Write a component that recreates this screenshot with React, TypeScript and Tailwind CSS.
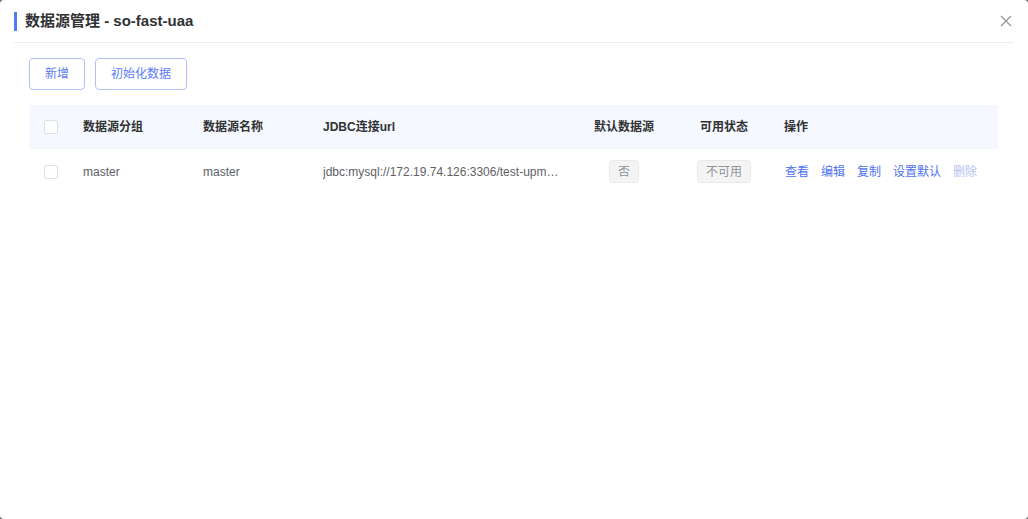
import React from 'react';

const rows = [
  {
    group: 'master',
    name: 'master',
    url: 'jdbc:mysql://172.19.74.126:3306/test-upms?useUnicode=true&characterEncoding=utf8',
    isDefault: '否',
    status: '不可用',
  },
];

function Checkbox() {
  return <span className="block w-[14px] h-[14px] border border-[#dcdfe6] rounded-[2px] bg-white" />;
}

function Tag({ children }: { children: React.ReactNode }) {
  return (
    <span className="inline-flex items-center h-[23px] px-[8px] text-[12px] leading-none text-[#909399] bg-[#f4f4f5] border border-[#e9e9eb] rounded-[4px]">
      {children}
    </span>
  );
}

export default function App() {
  return (
    <div
      className="w-[1028px] h-[519px] bg-[#6b6b6b]"
      style={{ fontFamily: '"Liberation Sans", "Noto Sans CJK SC", sans-serif' }}
    >
      <div className="w-full h-full bg-white rounded-[4px] flex flex-col">
        {/* Header */}
        <div className="mx-[14px] h-[43px] border-b border-[#ebeef5] flex items-center justify-between">
          <div className="flex items-center gap-[8px]">
            <span className="block w-[3px] h-[19px] bg-[#4e7cf6]" />
            <h1 className="text-[15px] font-bold text-[#303133]">数据源管理 - so-fast-uaa</h1>
          </div>
          <button className="w-[16px] h-[16px] flex items-center justify-center">
            <svg width="12" height="12" viewBox="0 0 12 12" fill="none" stroke="#909399" strokeWidth="1.2">
              <path d="M1 1L11 11M11 1L1 11" />
            </svg>
          </button>
        </div>

        {/* Body */}
        <div className="pl-[29px] pr-[30px] pt-[15px] text-[12px]">
          <div className="flex gap-[10px]">
            <button className="h-[32px] w-[56px] border border-[#b3c0f7] rounded-[4px] text-[#5b7cf5] bg-white">
              新增
            </button>
            <button className="h-[32px] w-[92px] border border-[#b3c0f7] rounded-[4px] text-[#5b7cf5] bg-white">
              初始化数据
            </button>
          </div>

          <div className="mt-[15px]">
            <div className="grid grid-cols-[54px_120px_120px_251px_100px_100px_1fr] items-center h-[44px] bg-[#f5f8fe] font-bold text-[#303133]">
              <div className="pl-[15px]">
                <Checkbox />
              </div>
              <div>数据源分组</div>
              <div>数据源名称</div>
              <div>JDBC连接url</div>
              <div className="text-center">默认数据源</div>
              <div className="text-center">可用状态</div>
              <div className="pl-[10px]">操作</div>
            </div>
            {rows.map((r) => (
              <div
                key={r.name}
                className="grid grid-cols-[54px_120px_120px_251px_100px_100px_1fr] items-center h-[45px] text-[#606266]"
              >
                <div className="pl-[15px]">
                  <Checkbox />
                </div>
                <div>{r.group}</div>
                <div>{r.name}</div>
                <div className="truncate pr-[12px]">{r.url}</div>
                <div className="flex justify-center">
                  <Tag>{r.isDefault}</Tag>
                </div>
                <div className="flex justify-center">
                  <Tag>{r.status}</Tag>
                </div>
                <div className="pl-[11px] flex gap-[12px] text-[#4e72f4]">
                  <span>查看</span>
                  <span>编辑</span>
                  <span>复制</span>
                  <span>设置默认</span>
                  <span className="text-[#b4bff3]">删除</span>
                </div>
              </div>
            ))}
          </div>
        </div>
      </div>
    </div>
  );
}
